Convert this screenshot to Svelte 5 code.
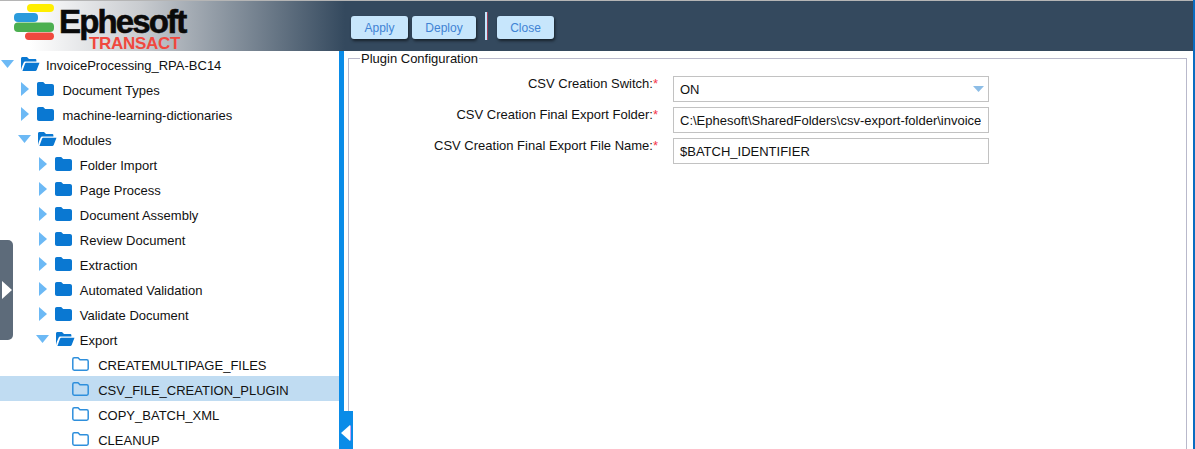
<script>
  const rows = [
    { label: 'InvoiceProcessing_RPA-BC14', depth: 0, kind: 'open' },
    { label: 'Document Types', depth: 1, kind: 'closed' },
    { label: 'machine-learning-dictionaries', depth: 1, kind: 'closed' },
    { label: 'Modules', depth: 1, kind: 'open' },
    { label: 'Folder Import', depth: 2, kind: 'closed' },
    { label: 'Page Process', depth: 2, kind: 'closed' },
    { label: 'Document Assembly', depth: 2, kind: 'closed' },
    { label: 'Review Document', depth: 2, kind: 'closed' },
    { label: 'Extraction', depth: 2, kind: 'closed' },
    { label: 'Automated Validation', depth: 2, kind: 'closed' },
    { label: 'Validate Document', depth: 2, kind: 'closed' },
    { label: 'Export', depth: 2, kind: 'open' },
    { label: 'CREATEMULTIPAGE_FILES', depth: 3, kind: 'leaf' },
    { label: 'CSV_FILE_CREATION_PLUGIN', depth: 3, kind: 'leaf', selected: true },
    { label: 'COPY_BATCH_XML', depth: 3, kind: 'leaf' },
    { label: 'CLEANUP', depth: 3, kind: 'leaf' }
  ];
</script>

<div class="page">
  <div class="topline"></div>
  <header class="header">
    <div class="brand">
      <svg class="stripes" width="42" height="38" viewBox="0 0 42 38">
        <rect x="13" y="0" width="27" height="8" rx="4" fill="#ffee00" />
        <rect x="0" y="9" width="24" height="9" rx="4" fill="#2a9bdc" />
        <rect x="0" y="18.500" width="40" height="9.500" rx="4" fill="#4caf50" />
        <rect x="11" y="28.500" width="29" height="7.500" rx="3.700" fill="#f0493e" />
      </svg>
      <div class="wordmark">Ephesoft</div>
      <div class="transact">TRANSACT</div>
    </div>
    <div class="actions">
      <button class="btn apply">Apply</button>
      <button class="btn deploy">Deploy</button>
      <span class="sep"></span>
      <button class="btn close">Close</button>
    </div>
  </header>

  <main class="body">
    <nav class="tree">
      {#each rows as row}
        <div class="row" class:selected={row.selected}>
          <span class="indent" style="width: {row.depth * 17.4}px"></span>
          <span class="arrow-slot">
            {#if row.kind === 'open'}
              <svg width="13" height="8" viewBox="0 0 13 8"><path d="M0 0H13L6.500 8Z" fill="#6cb9f5" /></svg>
            {:else if row.kind === 'closed'}
              <svg class="closed-arrow" width="8" height="14" viewBox="0 0 8 14"><path d="M0 0L8 7L0 14Z" fill="#6cb9f5" /></svg>
            {/if}
          </span>
          <span class="icon-slot">
            {#if row.kind === 'open'}
              <svg width="20" height="16" viewBox="0 0 20 16">
                <path d="M1 14V2.500C1 1.600 1.600 1 2.500 1H7L9 3H15C15.900 3 16.400 3.500 16.400 4.400V5.400H5.500C4.600 5.400 4 5.900 3.600 6.700L1.800 10.900Z" fill="#0a78d2" />
                <path d="M2.400 15L5 7.700C5.200 7.100 5.700 6.800 6.300 6.800H19.500L16.700 14C16.400 14.700 15.900 15 15.300 15Z" fill="#0a78d2" />
              </svg>
            {:else if row.kind === 'closed'}
              <svg width="17" height="14" viewBox="0 0 17 14">
                <path d="M0 2C0 .9.7 0 1.800 0H6.200L8.200 2H15C16.100 2 17 2.900 17 4V12C17 13.100 16.100 14 15 14H2C.9 14 0 13.100 0 12Z" fill="#0a78d2" />
              </svg>
            {:else}
              <svg width="17" height="14" viewBox="0 0 17 14">
                <path d="M.8 2.200C.8 1.300 1.400.8 2.200.8H6L8 2.800H14.800C15.600 2.800 16.200 3.400 16.200 4.200V11.800C16.200 12.600 15.600 13.200 14.800 13.200H2.200C1.400 13.200.8 12.600.8 11.800Z" fill="none" stroke="#2e8fdc" stroke-width="1.500" />
              </svg>
            {/if}
          </span>
          <span class="label" class:leaf={row.kind === 'leaf'} class:root={row.depth === 0}>{row.label}</span>
        </div>
      {/each}
    </nav>

    <div class="splitter">
      <div class="collapse">
        <svg width="10" height="16" viewBox="0 0 10 16">
          <path d="M9 0V16L0 8Z" fill="#fff" />
          <path d="M9.500 0.500V15.500" stroke="#c8a0f0" stroke-width="1" />
        </svg>
      </div>
    </div>

    <section class="content">
      <fieldset class="config">
        <legend>Plugin Configuration</legend>
        <div class="form">
          <span class="field-label">CSV Creation Switch:<em>*</em></span>
          <div class="control select">
            <span>ON</span>
            <svg width="11" height="6" viewBox="0 0 11 6"><path d="M0 0H11L5.500 6Z" fill="#8dbde6" /></svg>
          </div>
          <span class="field-label">CSV Creation Final Export Folder:<em>*</em></span>
          <div class="control"><span class="clip">C:\Ephesoft\SharedFolders\csv-export-folder\invoice</span></div>
          <span class="field-label">CSV Creation Final Export File Name:<em>*</em></span>
          <div class="control"><span>$BATCH_IDENTIFIER</span></div>
        </div>
      </fieldset>
    </section>
  </main>

  <div class="handle">
    <svg width="10" height="18" viewBox="0 0 10 18"><path d="M0 0L10 9L0 18Z" fill="#fff" /></svg>
  </div>
</div>

<style>
  :global(body) {
    margin: 0;
    background: #fff;
  }
  .page {
    position: relative;
    width: 1195px;
    height: 449px;
    box-sizing: border-box;
    border-right: 2px solid #0a6cc0;
    overflow: hidden;
    display: flex;
    flex-direction: column;
    font-family: "Liberation Sans", Arial, sans-serif;
    font-size: 13px;
    color: #111;
  }
  .topline {
    height: 1px;
    background: #b5b5b5;
    flex: none;
  }
  .header {
    height: 50px;
    flex: none;
    display: flex;
    background: linear-gradient(90deg, #fff 0, #fff 30px, #c9ccd0 140px, #34495e 345px);
  }
  .brand {
    position: relative;
    width: 351px;
    flex: none;
  }
  .stripes {
    position: absolute;
    left: 14px;
    top: 3px;
  }
  .wordmark {
    position: absolute;
    left: 59px;
    top: 2px;
    font-size: 33px;
    line-height: 38px;
    font-weight: 700;
    letter-spacing: -1.850px;
    color: #0a0a0a;
    -webkit-text-stroke: 0.600px #0a0a0a;
  }
  .transact {
    position: absolute;
    left: 89px;
    top: 35px;
    font-size: 17px;
    line-height: 15px;
    font-weight: 700;
    letter-spacing: -0.300px;
    color: #f0483e;
  }
  .actions {
    display: flex;
    align-items: flex-start;
    padding-top: 15px;
  }
  .btn {
    height: 23px;
    padding: 0;
    border: 0;
    border-radius: 3px;
    background: #c7e6fc;
    color: #3f83d4;
    font: 12px "Liberation Sans", Arial, sans-serif;
    box-shadow: 1px 2px 3px rgba(0, 0, 0, 0.55);
  }
  .apply { width: 57px; margin-right: 4px; }
  .deploy { width: 64px; }
  .close { width: 57px; }
  .sep {
    width: 3px;
    height: 28px;
    margin: -4px 9px 0;
    background: linear-gradient(90deg, #c7e6fc 0 2px, #a04058 2px);
  }
  .body {
    flex: 1;
    min-height: 0;
    display: flex;
  }
  .tree {
    width: 339px;
    flex: none;
    overflow: hidden;
  }
  .row {
    height: 25px;
    display: flex;
    align-items: center;
  }
  .row.selected {
    background: #c0dcf2;
  }
  .indent {
    flex: none;
  }
  .arrow-slot {
    width: 20px;
    flex: none;
    display: flex;
    align-items: center;
    padding-left: 1px;
    box-sizing: border-box;
    height: 14px;
  }
  .closed-arrow {
    margin-left: 3px;
  }
  .icon-slot {
    width: 25px;
    flex: none;
    display: flex;
    align-items: center;
  }
  .label {
    padding-top: 4px;
    white-space: nowrap;
  }
  .label.leaf {
    margin-left: 1px;
  }
  .label.root {
    margin-left: 1px;
  }
  .splitter {
    width: 5px;
    flex: none;
    background: #0a8ce8;
    position: relative;
  }
  .collapse {
    position: absolute;
    left: 0;
    bottom: 0;
    width: 14px;
    height: 38px;
    box-sizing: border-box;
    padding-top: 5px;
    background: #0a8ce8;
    display: flex;
    align-items: center;
    justify-content: center;
  }
  .content {
    flex: 1;
    min-width: 0;
    padding: 0 6px 0 4px;
  }
  .config {
    margin: 0;
    padding: 10px 0 0;
    height: 420px;
    box-sizing: border-box;
    border: 1px solid #b9b9cb;
    min-width: 0;
  }
  legend {
    margin-left: 11px;
    padding: 0 1px;
    line-height: 15px;
    font-size: 13px;
  }
  .form {
    display: grid;
    grid-template-columns: 311px 316px;
    column-gap: 13px;
    row-gap: 5px;
    grid-auto-rows: 26px;
  }
  .field-label {
    text-align: right;
    line-height: 14px;
    padding: 1px 2px 0 0;
    white-space: nowrap;
  }
  em {
    color: #f4364c;
    font-style: normal;
  }
  .control {
    box-sizing: border-box;
    border: 1px solid #c2c2c2;
    display: flex;
    align-items: center;
    justify-content: space-between;
    padding: 0 6px;
    min-width: 0;
    font-size: 13px;
    overflow: hidden;
    white-space: nowrap;
  }
  .select {
    padding-right: 4px;
  }
  .clip {
    overflow: hidden;
  }
  .handle {
    position: absolute;
    left: 0;
    top: 240px;
    width: 13px;
    height: 100px;
    box-sizing: border-box;
    padding-left: 2px;
    background: #5d6b7a;
    border-radius: 0 5px 5px 0;
    display: flex;
    align-items: center;
  }
</style>
